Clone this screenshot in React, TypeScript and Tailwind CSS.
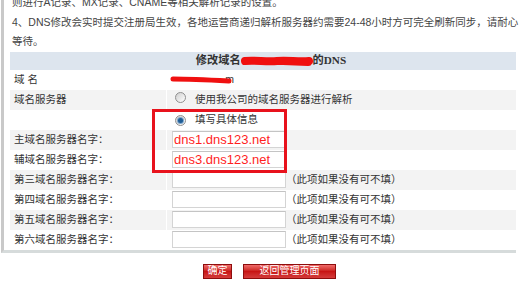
const cjk = 'font-[family-name:"Liberation_Sans","Noto_Sans_CJK_SC",sans-serif]';

function Radio({ checked }: { checked?: boolean }) {
  return (
    <span className="inline-flex w-[11px] h-[11px] items-center justify-center rounded-full border border-[#8f8f8f] bg-linear-to-br from-[#cfcfcf] to-white shrink-0">
      {checked && <span className="w-[5px] h-[5px] rounded-full bg-[#1f5d96] shadow-[0_0_0_1px_#7fa7cc]" />}
    </span>
  );
}

function Scribble({ w, h, d, sw }: { w: number; h: number; d: string; sw: number }) {
  return (
    <svg width={w} height={h} viewBox={`0 0 ${w} ${h}`} className="block">
      <path d={d} stroke="#f01010" strokeWidth={sw} strokeLinecap="round" strokeLinejoin="round" fill="none" />
    </svg>
  );
}

function Row({ label, gray, children }: { label?: string; gray?: boolean; children?: React.ReactNode }) {
  const bg = gray ? "bg-[#f3f3f3]" : "bg-white";
  return (
    <div className="flex h-[20px]">
      <div className={`w-[156px] pl-[4px] flex items-center ${bg}`}>{label}</div>
      <div className={`flex-1 ml-[1px] flex items-center ${bg}`}>{children}</div>
    </div>
  );
}

function Field({ value }: { value?: string }) {
  return (
    <div className="ml-[5px] w-[114px] h-[17px] bg-white border border-[#d4d4d4] border-t-[#c4c4c4] flex items-center pl-[1px]">
      {value && (
        <span className="font-[family-name:'Liberation_Sans',sans-serif] text-[13px] text-[#ff1f1f] leading-none">{value}</span>
      )}
    </div>
  );
}

const note = "（此项如果没有可不填）";

export default function App() {
  return (
    <div className={`relative w-[520px] h-[281px] overflow-hidden bg-white text-[10.5px] text-[#333] ${cjk}`}>
      <div className="ml-[1px] w-[515px] border-l-[3px] border-l-[#c9c9c9] border-b-[3px] border-b-[#d6dbdb] pl-[6px]">
        <div className="-mt-[7px] pl-[2px] leading-[19.5px] text-[#444]">
          <div>则进行A记录、MX记录、CNAME等相关解析记录的设置。</div>
          <div className="whitespace-nowrap">4、DNS修改会实时提交注册局生效，各地运营商递归解析服务器约需要24-48小时方可完全刷新同步，请耐心</div>
          <div>等待。</div>
        </div>

        <div className="h-[18px] bg-[#dde5ee] flex items-center justify-center pl-[16px] font-bold text-[11.2px] text-[#333] font-[family-name:'Liberation_Serif','Noto_Sans_CJK_SC',serif]">
          <span>修改域名</span>
          <span className="w-[72px] h-[12px] inline-block">
            <Scribble w={72} h={12} sw={8} d="M4 6 C 14 5, 26 7, 36 6 S 58 7, 68 6 M 42 6 L 67 7" />
          </span>
          <span>的DNS</span>
        </div>

        <Row label="域 名">
          <div className="relative ml-[3px] w-[64px] h-[10px]">
            <span className="absolute right-0 top-[-3px] text-[#333]">m</span>
            <div className="absolute left-0 top-0">
              <Scribble w={62} h={10} sw={5} d="M3 4 C 20 4, 40 5, 59 6" />
            </div>
          </div>
        </Row>
        <Row label="域名服务器" gray>
          <span className="ml-[8px]"><Radio /></span>
          <span className="ml-[9px]">使用我公司的域名服务器进行解析</span>
        </Row>
        <Row>
          <span className="ml-[8px]"><Radio checked /></span>
          <span className="ml-[9px]">填写具体信息</span>
        </Row>
        <Row label="主域名服务器名字：" gray>
          <Field value="dns1.dns123.net" />
        </Row>
        <Row label="辅域名服务器名字：">
          <Field value="dns3.dns123.net" />
        </Row>
        <Row label="第三域名服务器名字：" gray>
          <Field />
          <span>{note}</span>
        </Row>
        <Row label="第四域名服务器名字：">
          <Field />
          <span>{note}</span>
        </Row>
        <Row label="第五域名服务器名字：" gray>
          <Field />
          <span>{note}</span>
        </Row>
        <Row label="第六域名服务器名字：">
          <Field />
          <span>{note}</span>
        </Row>
      </div>

      <div className="flex mt-[11px] pl-[203px] gap-[11px]">
        <button className="w-[29px] h-[15px] border border-[#8e0d0d] bg-linear-to-b from-[#f06a6a] via-[#c81414] to-[#d43a3a] text-white text-[10px] leading-none flex items-center justify-center">
          确定
        </button>
        <button className="w-[93px] h-[15px] border border-[#8e0d0d] bg-linear-to-b from-[#f06a6a] via-[#c81414] to-[#d43a3a] text-white text-[10px] leading-none flex items-center justify-center">
          返回管理页面
        </button>
      </div>

      <div className="absolute left-[152px] top-[109px] w-[135px] h-[64px] border-[3px] border-[#e8121c]" />
    </div>
  );
}
